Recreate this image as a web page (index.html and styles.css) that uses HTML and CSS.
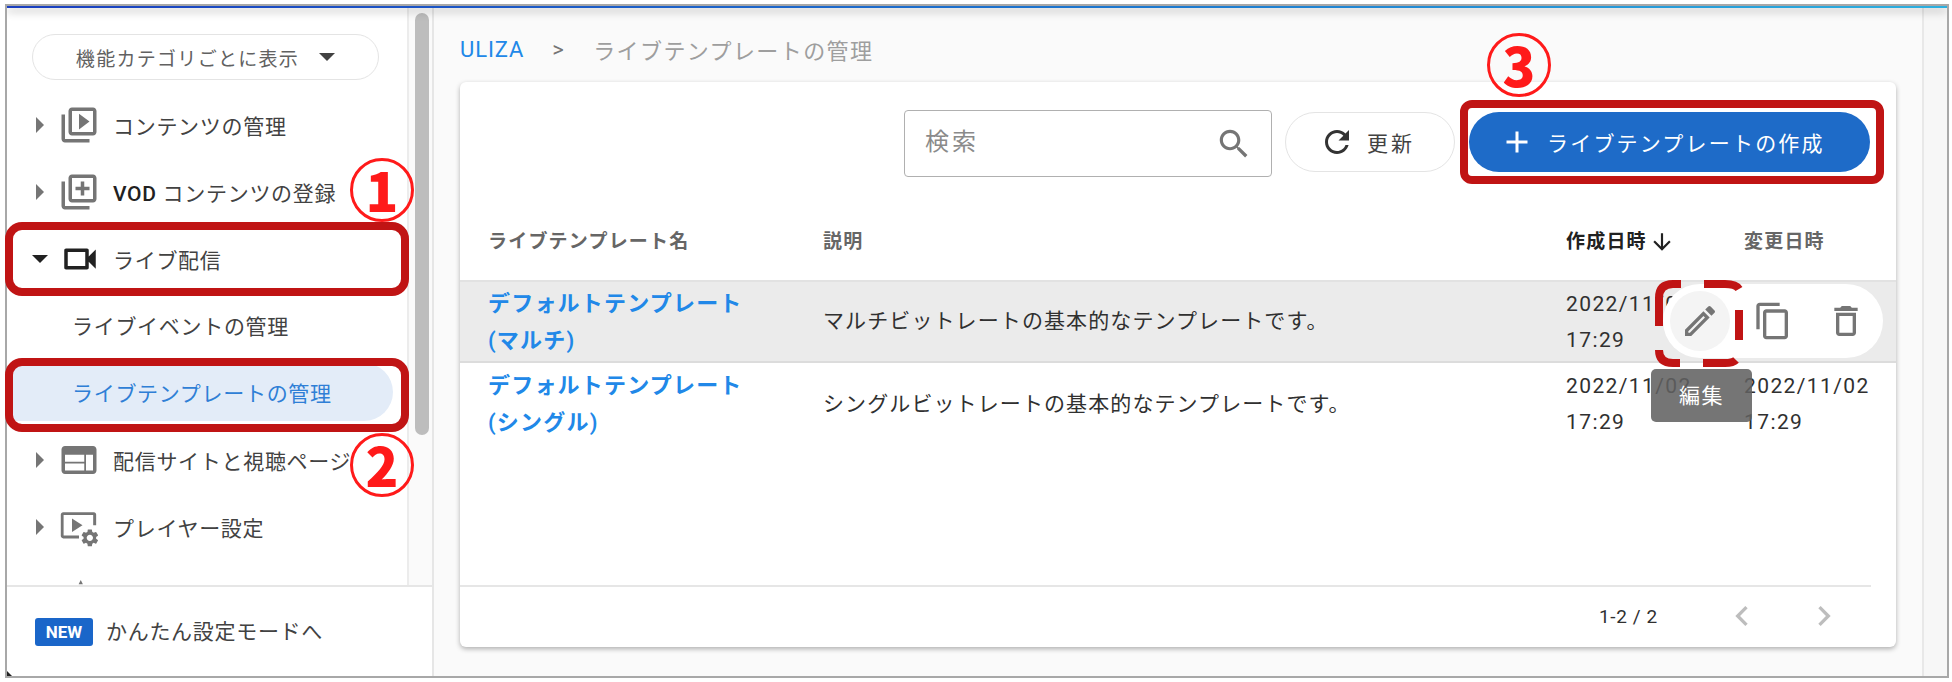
FILE: index.html
```html
<!DOCTYPE html>
<html lang="ja">
  <head>
    <meta charset="UTF-8" />
    <title>ライブテンプレートの管理</title>
    <link rel="stylesheet" href="styles.css">
  </head>
  <body>
    <div class="window">
      <div class="top-line"></div>
      <div class="columns">
        <!-- Sidebar -->
        <aside class="sidebar">
          <div class="side-scroll">
            <div class="side-list">
              <div class="select-pill">
                <span>機能カテゴリごとに表示</span>
                <i class="tri-down"></i>
              </div>
              <nav class="menu">
                <div class="menu-row">
                  <i class="tri-right"></i>
                  <svg class="menu-icon" viewBox="0 0 24 24"><path d="M4 6H2v14c0 1.1.9 2 2 2h14v-2H4V6zm16-4H8c-1.1 0-2 .9-2 2v12c0 1.1.9 2 2 2h12c1.1 0 2-.9 2-2V4c0-1.1-.9-2-2-2zm0 14H8V4h12v12zM12 5.5v9l6-4.5z"/></svg>
                  <span>コンテンツの管理</span>
                </div>
                <div class="menu-row">
                  <i class="tri-right"></i>
                  <svg class="menu-icon" viewBox="0 0 24 24"><path d="M4 6H2v14c0 1.1.9 2 2 2h14v-2H4V6zm16-4H8c-1.1 0-2 .9-2 2v12c0 1.1.9 2 2 2h12c1.1 0 2-.9 2-2V4c0-1.1-.9-2-2-2zm0 14H8V4h12v12zm-7-2h2v-3h3V9h-3V6h-2v3h-3v2h3z"/></svg>
                  <span><b>VOD</b> コンテンツの登録</span>
                </div>
                <div class="menu-row open">
                  <i class="tri-down dark"></i>
                  <svg class="menu-icon" viewBox="0 0 24 24"><path d="M15 8v8H5V8h10m1-2H4c-.55 0-1 .45-1 1v10c0 .55.45 1 1 1h12c.55 0 1-.45 1-1v-3.5l4 4v-11l-4 4V7c0-.55-.45-1-1-1z"/></svg>
                  <span>ライブ配信</span>
                </div>
                <div class="sub-row">ライブイベントの管理</div>
                <div class="sub-row active">ライブテンプレートの管理</div>
                <div class="menu-row">
                  <i class="tri-right"></i>
                  <svg class="menu-icon" viewBox="0 0 24 24"><path d="M20 4H4c-1.1 0-2 .9-2 2v12c0 1.1.9 2 2 2h16c1.1 0 2-.9 2-2V6c0-1.1-.9-2-2-2zm-5 14H4v-4h11v4zm0-5H4V9h11v4zm5 5h-4V9h4v9z"/></svg>
                  <span>配信サイトと視聴ページ</span>
                </div>
                <div class="menu-row">
                  <i class="tri-right"></i>
                  <svg class="menu-icon" viewBox="0 0 24 24"><path d="M3 3.5h17.5c.8 0 1.3.6 1.3 1.3V11h-1.7V5.2H3.2v11.6H12v1.7H3c-.8 0-1.4-.6-1.4-1.3V4.8c0-.7.6-1.3 1.4-1.3z"/><path d="M8 7.2v7.6l6-3.8z"/><g transform="translate(12.2 12.2) scale(.5)"><path d="M19.14 12.94c.04-.3.06-.61.06-.94 0-.32-.02-.64-.07-.94l2.03-1.58a.49.49 0 0 0 .12-.61l-1.92-3.32a.488.488 0 0 0-.59-.22l-2.39.96c-.5-.38-1.03-.7-1.62-.94l-.36-2.54a.484.484 0 0 0-.48-.41h-3.84c-.24 0-.43.17-.47.41l-.36 2.54c-.59.24-1.13.57-1.62.94l-2.39-.96c-.22-.08-.47 0-.59.22L2.74 8.87c-.12.21-.08.47.12.61l2.03 1.58c-.05.3-.09.63-.09.94s.02.64.07.94l-2.03 1.58a.49.49 0 0 0-.12.61l1.92 3.32c.12.22.37.29.59.22l2.39-.96c.5.38 1.03.7 1.62.94l.36 2.54c.05.24.24.41.48.41h3.84c.24 0 .44-.17.47-.41l.36-2.54c.59-.24 1.13-.56 1.62-.94l2.39.96c.22.08.47 0 .59-.22l1.92-3.32c.12-.22.07-.47-.12-.61l-2.01-1.58zM12 15.6c-1.98 0-3.6-1.62-3.6-3.6s1.62-3.6 3.6-3.6 3.6 1.62 3.6 3.6-1.62 3.6-3.6 3.6z"/></g></svg>
                  <span>プレイヤー設定</span>
                </div>
                <!-- next item, cut off by the footer -->
                <div class="menu-row">
                  <i class="tri-right"></i>
                  <svg class="menu-icon" viewBox="0 0 24 24"><path d="M13 4l1.2 2.4h-2.4z"/></svg>
                </div>
              </nav>
            </div>
            <div class="side-track"><div class="side-thumb"></div></div>
          </div>
          <div class="side-footer">
            <span class="new-badge">NEW</span>
            <span class="footer-label">かんたん設定モードへ</span>
          </div>
        </aside>

        <!-- Main -->
        <main class="main">
          <div class="breadcrumb">
            <a class="crumb-link">ULIZA</a>
            <span class="crumb-sep">&gt;</span>
            <span>ライブテンプレートの管理</span>
          </div>
          <section class="card">
            <div class="toolbar">
              <div class="search-box">
                <span>検索</span>
                <svg viewBox="0 0 24 24"><path d="M15.5 14h-.79l-.28-.27C15.41 12.59 16 11.11 16 9.5 16 5.91 13.09 3 9.5 3S3 5.91 3 9.5 5.91 16 9.5 16c1.61 0 3.09-.59 4.23-1.57l.27.28v.79l5 4.99L20.49 19l-4.99-5zm-6 0C7.01 14 5 11.99 5 9.5S7.01 5 9.5 5 14 7.01 14 9.5 11.99 14 9.5 14z"/></svg>
              </div>
              <button class="btn-refresh">
                <svg viewBox="0 0 24 24"><path d="M17.65 6.35C16.2 4.9 14.21 4 12 4c-4.42 0-7.99 3.58-7.99 8s3.57 8 7.99 8c3.73 0 6.84-2.55 7.73-6h-2.08c-.82 2.33-3.04 4-5.65 4-3.31 0-6-2.69-6-6s2.69-6 6-6c1.66 0 3.14.69 4.22 1.78L13 11h7V4l-2.35 2.35z"/></svg>
                更新
              </button>
              <button class="btn-create">
                <svg viewBox="0 0 24 24"><path d="M19 13h-6v6h-2v-6H5v-2h6V5h2v6h6v2z"/></svg>
                ライブテンプレートの作成
              </button>
            </div>

            <div class="table">
              <div class="table-row table-head">
                <div>ライブテンプレート名</div>
                <div>説明</div>
                <div class="sorted">作成日時<svg viewBox="0 0 24 24"><path d="M20 12l-1.41-1.41L13 16.17V4h-2v12.17l-5.58-5.59L4 12l8 8 8-8z"/></svg></div>
                <div>変更日時</div>
              </div>
              <div class="table-row hover">
                <a class="name-link">デフォルトテンプレート<br>(マルチ)</a>
                <div class="desc">マルチビットレートの基本的なテンプレートです。</div>
                <div class="date">2022/11/02<br>17:29</div>
                <div class="date">2022/11/02<br>17:29</div>
                <div class="row-actions">
                  <span class="action on"><svg viewBox="0 0 24 24"><path d="M3 17.25V21h3.75L17.81 9.94l-3.75-3.75L3 17.25zM5.92 19H5v-.92l9.06-9.06.92.92L5.92 19zM20.71 7.04c.39-.39.39-1.02 0-1.41l-2.34-2.34a1 1 0 0 0-1.41 0l-1.83 1.83 3.75 3.75 1.83-1.83z"/></svg></span>
                  <span class="action"><svg viewBox="0 0 24 24"><path d="M16 1H4c-1.1 0-2 .9-2 2v14h2V3h12V1zm3 4H8c-1.1 0-2 .9-2 2v14c0 1.1.9 2 2 2h11c1.1 0 2-.9 2-2V7c0-1.1-.9-2-2-2zm0 16H8V7h11v14z"/></svg></span>
                  <span class="action"><svg viewBox="0 0 24 24"><path d="M6 19c0 1.1.9 2 2 2h8c1.1 0 2-.9 2-2V7H6v12zM8 9h8v10H8V9zm7.5-5l-1-1h-5l-1 1H5v2h14V4h-3.5z"/></svg></span>
                </div>
              </div>
              <div class="table-row">
                <a class="name-link">デフォルトテンプレート<br>(シングル)</a>
                <div class="desc">シングルビットレートの基本的なテンプレートです。</div>
                <div class="date">2022/11/02<br>17:29</div>
                <div class="date">2022/11/02<br>17:29</div>
              </div>
            </div>

            <div class="pager">
              <span class="pager-count">1-2 / 2</span>
              <svg viewBox="0 0 24 24"><path d="M15.41 7.41L14 6l-6 6 6 6 1.41-1.41L10.83 12z"/></svg>
              <svg viewBox="0 0 24 24"><path d="M10 6L8.59 7.41 13.17 12l-4.58 4.59L10 18l6-6z"/></svg>
            </div>
          </section>
        </main>
        <div class="main-gutter"></div>
      </div>
    </div>

    <!-- Annotations over the screenshot -->
    <div class="mark mark-1"></div>
    <div class="mark mark-2"></div>
    <div class="mark mark-3"></div>
    <div class="badge badge-1">1</div>
    <div class="badge badge-2">2</div>
    <div class="badge badge-3">3</div>
    <svg class="mark-dash" viewBox="0 0 88 87">
      <path d="M26 4H18Q4 4 4 18V46"/>
      <path d="M49 4H70Q81 4 84 9"/>
      <path d="M84 30V60"/>
      <path d="M4 70Q4 83 18 83H25"/>
      <path d="M48 83H70Q78 83 81 80"/>
    </svg>
    <div class="tooltip">編集</div>
  </body>
</html>
```

FILE: styles.css
```css
* {
  margin: 0;
  box-sizing: border-box;
}

body {
  width: 1952px;
  height: 682px;
  overflow: hidden;
  background: #fff;
  font-family: Roboto, "Noto Sans CJK JP", sans-serif;
  font-size: 21px;
  letter-spacing: 0.7px;
  color: #303030;
  position: relative;
}

svg {
  fill: currentColor;
  flex: none;
}

/* Window frame */
.window {
  position: absolute;
  left: 5px;
  top: 4px;
  width: 1944px;
  height: 674px;
  border: 2px solid #a8a8a8;
  display: flex;
  flex-direction: column;
  overflow: hidden;
}

.window::after {
  content: "";
  position: absolute;
  left: 0;
  bottom: 0;
  border-left: 5px solid #222;
  border-top: 5px solid transparent;
  z-index: 3;
}

.top-line {
  height: 2px;
  flex: none;
  background: linear-gradient(to right, #1a3fc0, #1d7ad0 60%, #2cb0e0);
  box-shadow: 0 3px 9px rgba(0, 0, 0, 0.45);
  position: relative;
  z-index: 2;
}

.columns {
  flex: 1;
  display: flex;
  min-height: 0;
}

/* Sidebar */
.sidebar {
  width: 427px;
  flex: none;
  display: flex;
  flex-direction: column;
  background: #fff;
  border-right: 2px solid #e6e6e6;
}

.side-scroll {
  flex: 1;
  display: flex;
  min-height: 0;
}

.side-list {
  flex: 1;
  min-width: 0;
  overflow: hidden;
  padding-top: 26px;
}

.side-track {
  width: 25px;
  flex: none;
  background: #fafafa;
  border-left: 2px solid #ececec;
  padding: 5px 4px 0 6px;
}

.side-thumb {
  width: 14px;
  height: 422px;
  border-radius: 7px;
  background: #bdbdbd;
}

.select-pill {
  width: 347px;
  height: 46px;
  margin-left: 25px;
  border: 1px solid #e4e4e4;
  border-radius: 23px;
  display: flex;
  align-items: center;
  justify-content: center;
  gap: 20px;
  font-size: 19px;
  letter-spacing: 1.3px;
  color: #616161;
}

.tri-down {
  width: 0;
  height: 0;
  border-left: 8px solid transparent;
  border-right: 8px solid transparent;
  border-top: 8px solid #424242;
}

.tri-down.dark {
  border-top-color: #212121;
  margin-left: 1px;
}

.tri-right {
  width: 0;
  height: 0;
  margin-left: 5px;
  border-top: 8px solid transparent;
  border-bottom: 8px solid transparent;
  border-left: 8px solid #757575;
}

.menu {
  margin-top: 11px;
  display: flex;
  flex-direction: column;
}

.menu-row {
  height: 67px;
  flex: none;
  display: flex;
  align-items: center;
  padding-left: 24px;
  color: #424242;
  white-space: nowrap;
}

.menu-row .menu-icon {
  width: 42px;
  height: 42px;
  margin-left: 14px;
  margin-right: 13px;
  color: #757575;
}

.menu-row.open .menu-icon {
  color: #212121;
  margin-left: 11px;
  margin-right: 12px;
}

.menu-row b {
  font-weight: 500;
  color: #212121;
}

.sub-row {
  height: 58px;
  flex: none;
  margin: 4px 0 5px 0;
  width: 386px;
  display: flex;
  align-items: center;
  padding-left: 65px;
  color: #424242;
  white-space: nowrap;
}

.sub-row.active {
  background: #e3ecf8;
  color: #2f7fd6;
  border-radius: 0 29px 29px 0;
  margin-left: 6px;
  width: 380px;
  padding-left: 59px;
}

.side-footer {
  height: 91px;
  flex: none;
  border-top: 2px solid #e6e6e6;
  display: flex;
  align-items: center;
  gap: 13px;
  padding-left: 28px;
  color: #424242;
  background: #fff;
  position: relative;
}

.footer-label {
  padding-bottom: 4px;
}

.new-badge {
  width: 58px;
  height: 28px;
  border-radius: 3px;
  background: #1a66c9;
  color: #fff;
  font-size: 17px;
  font-weight: 700;
  letter-spacing: 0;
  display: flex;
  align-items: center;
  justify-content: center;
}

/* Main */
.main {
  flex: 1;
  min-width: 0;
  background: #fafafa;
  padding-left: 26px;
  display: flex;
  flex-direction: column;
}

.main-gutter {
  width: 25px;
  flex: none;
  background: #f7f7f7;
  border-left: 2px solid #e8e8e8;
}

.breadcrumb {
  height: 74px;
  flex: none;
  display: flex;
  align-items: center;
  padding-top: 8px;
  font-size: 22px;
  letter-spacing: 1.4px;
  color: #9e9e9e;
}

.crumb-link {
  color: #2188e8;
  letter-spacing: 0.9px;
}

.crumb-sep {
  margin: 0 28px 0 28px;
  color: #757575;
}

.card {
  width: 1436px;
  height: 565px;
  background: #fff;
  border-radius: 6px;
  box-shadow: 0 2px 5px rgba(0, 0, 0, 0.3);
  display: flex;
  flex-direction: column;
}

.toolbar {
  height: 120px;
  flex: none;
  display: flex;
  align-items: flex-start;
  justify-content: flex-end;
  padding: 30px 26px 0 0;
  gap: 14px;
}

.search-box {
  width: 368px;
  height: 67px;
  margin-top: -2px;
  margin-right: -1px;
  border: 1px solid #b0b0b0;
  border-radius: 4px;
  display: flex;
  align-items: center;
  justify-content: space-between;
  padding: 0 18px 0 20px;
  font-size: 24px;
  letter-spacing: 3px;
  color: #8a8a8a;
}

.search-box span {
  padding-bottom: 8px;
}

.search-box svg {
  width: 38px;
  height: 38px;
  color: #757575;
}

button {
  font: inherit;
  letter-spacing: inherit;
  cursor: pointer;
  display: flex;
  align-items: center;
  height: 60px;
  border-radius: 30px;
}

.btn-refresh {
  width: 170px;
  background: #fff;
  border: 1px solid #e4e4e4;
  color: #424242;
  font-size: 21px;
  letter-spacing: 3px;
  padding-left: 33px;
  gap: 12px;
}

.btn-refresh svg {
  width: 36px;
  height: 36px;
  color: #333;
}

.btn-create {
  width: 401px;
  background: #1e6bc8;
  border: 0;
  color: #fff;
  font-size: 21px;
  letter-spacing: 2.2px;
  padding-left: 30px;
  gap: 12px;
}

.btn-create svg {
  width: 36px;
  height: 36px;
}

/* Table */
.table {
  flex: 1;
  min-height: 0;
}

.table-row {
  display: grid;
  grid-template-columns: 335px 743px 178px 1fr;
  align-items: center;
  padding-left: 28px;
  height: 82px;
  line-height: 37px;
  position: relative;
  white-space: nowrap;
}

.table-head {
  height: 80px;
  padding-top: 1px;
  font-size: 19px;
  font-weight: 600;
  letter-spacing: 1.2px;
  color: #666;
  border-bottom: 2px solid #e2e2e2;
}

.sorted {
  color: #212121;
  font-weight: 700;
  display: flex;
  align-items: center;
}

.sorted svg {
  width: 26px;
  height: 26px;
  margin-left: 2px;
}

.table-row.hover {
  height: 81px;
  background: #ebebeb;
  border-bottom: 2px solid #dcdcdc;
}

.name-link {
  color: #2188e8;
  font-size: 22px;
  font-weight: 600;
  letter-spacing: 1.2px;
}

.desc {
  letter-spacing: 1.1px;
}

.date {
  letter-spacing: 1.4px;
  line-height: 36px;
}

.row-actions {
  position: absolute;
  right: 13px;
  top: 2px;
  width: 220px;
  height: 74px;
  border-radius: 37px;
  background: #fff;
  display: flex;
  align-items: center;
  padding-left: 7px;
  color: #757575;
}

.action {
  width: 60px;
  height: 60px;
  flex: none;
  margin-right: 13px;
  border-radius: 50%;
  display: flex;
  align-items: center;
  justify-content: center;
}

.action.on {
  background: #f4f4f4;
}

.action svg {
  width: 40px;
  height: 40px;
}

/* Pager */
.pager {
  height: 62px;
  flex: none;
  margin-right: 25px;
  padding-bottom: 2px;
  border-top: 2px solid #e6e6e6;
  display: flex;
  align-items: center;
  font-size: 19px;
  letter-spacing: 0.6px;
  color: #bdbdbd;
}

.pager-count {
  color: #303030;
  flex: none;
  margin-left: 1139px;
  width: 123px;
}

.pager svg {
  width: 40px;
  height: 40px;
}

.pager svg + svg {
  margin-left: 42px;
}

/* Annotations */
.mark {
  position: absolute;
  border: 8px solid #c01414;
}

.mark-1 {
  left: 5px;
  top: 222px;
  width: 404px;
  height: 74px;
  border-radius: 17px;
}

.mark-2 {
  left: 5px;
  top: 358px;
  width: 404px;
  height: 74px;
  border-radius: 17px;
}

.mark-3 {
  left: 1460px;
  top: 100px;
  width: 424px;
  height: 84px;
  border-radius: 12px;
}

.badge {
  position: absolute;
  width: 64px;
  height: 64px;
  border: 3px solid #ff1a1a;
  border-radius: 50%;
  color: #ff1a1a;
  font-family: "Noto Sans CJK JP", sans-serif;
  font-size: 54px;
  font-weight: 900;
  letter-spacing: 0;
  line-height: 56px;
  text-align: center;
}

.badge-1 {
  left: 350px;
  top: 158px;
}

.badge-2 {
  left: 350px;
  top: 433px;
}

.badge-3 {
  left: 1487px;
  top: 33px;
}

.mark-dash {
  position: absolute;
  left: 1655px;
  top: 280px;
  width: 88px;
  height: 87px;
  fill: none;
  stroke: #c01414;
  stroke-width: 8px;
}

.tooltip {
  position: absolute;
  left: 1651px;
  top: 369px;
  width: 101px;
  height: 53px;
  padding-bottom: 4px;
  border-radius: 5px;
  background: rgba(97, 97, 97, 0.87);
  color: #fff;
  font-size: 21px;
  letter-spacing: 1.5px;
  display: flex;
  align-items: center;
  justify-content: center;
}
```
